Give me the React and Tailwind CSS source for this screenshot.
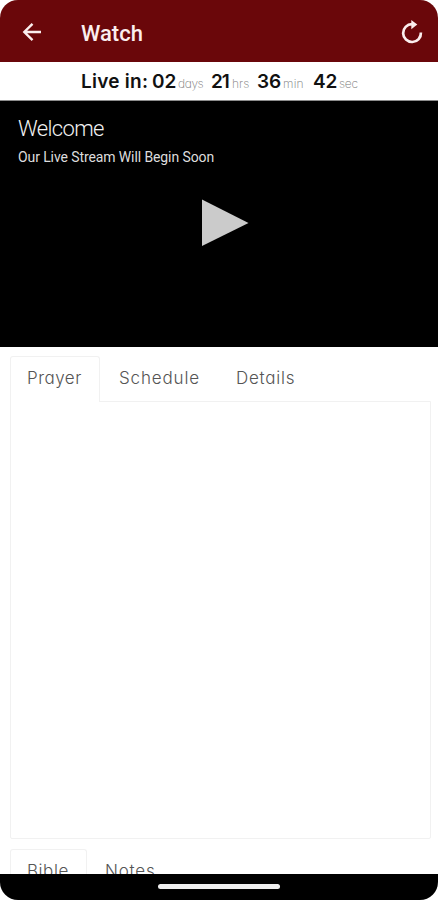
const geometric = "font-['Inter','Open_Sans',sans-serif] [font-feature-settings:'cv11','ss03']";

function Header() {
  return (
    <header className="flex h-[62px] shrink-0 items-center bg-[#6a070a] text-white">
      <svg className="mt-[2px] ml-[22px] h-5 w-5" viewBox="0 0 20 20" fill="none" stroke="#fbeeee" strokeWidth="2.4">
        <path d="M19 10H2.5M10.5 1.8L2.3 10l8.2 8.2" />
      </svg>
      <h1 className="mt-[5px] ml-[39px] font-[Roboto,sans-serif] text-[22px] leading-[26px] font-medium text-[#fbeeee]">
        Watch
      </h1>
      <svg className="mt-[2px] mr-[14px] ml-auto h-6 w-6" viewBox="0 0 24 24" fill="none">
        <path d="M12 4.2A8.9 8.9 0 1 0 20.9 12.5" stroke="#fbeeee" strokeWidth="2.7" />
        <path d="M11.3 0L17.3 4.6L11.3 9.2Z" fill="#fbeeee" />
      </svg>
    </header>
  );
}

function Countdown() {
  return (
    <div className={`flex h-[39px] shrink-0 items-baseline border-b border-[#8c8c8c] bg-white pt-[8px] pl-[81px] text-[19px] leading-6 font-semibold whitespace-nowrap text-[#111] ${geometric}`}>
      <span className="w-[71px] tracking-[0.25px]">Live in:</span>
      <span className="w-[26px]">02</span>
      <span className="w-[33px] text-[12px] font-extralight tracking-[-0.4px] text-[#777]">days</span>
      <span className="w-[21px] tracking-[-1px]">21</span>
      <span className="w-[25px] text-[12px] font-extralight text-[#777]">hrs</span>
      <span className="w-[26px]">36</span>
      <span className="w-[30px] text-[12px] font-extralight tracking-[0.2px] text-[#777]">min</span>
      <span className="w-[26px] tracking-[-0.2px]">42</span>
      <span className="text-[12px] font-extralight tracking-[-0.2px] text-[#777]">sec</span>
    </div>
  );
}

function Player() {
  return (
    <section className="flex h-[246px] shrink-0 flex-col bg-black pt-[14px] pl-[18px] font-[Roboto,sans-serif] whitespace-nowrap">
      <h2 className="mt-px text-[22px] leading-[26px] font-light tracking-[-0.65px] text-[#f2f2f2]">Welcome</h2>
      <p className="mt-[6px] text-[14px] leading-[18px] tracking-[-0.1px] text-[#ddd]">Our Live Stream Will Begin Soon</p>
      <svg className="mt-[33px] ml-[184px] h-[48px] w-[47px]" viewBox="0 0 47 48">
        <path d="M0 0.5L46.5 24L0 47Z" fill="#cbcbcb" />
      </svg>
    </section>
  );
}

function Tabs() {
  return (
    <nav className={`relative z-10 flex h-[46px] shrink-0 text-[17px] leading-6 font-light whitespace-nowrap text-[#555] ${geometric}`}>
      <span className="w-[90px] rounded-t-[3px] border border-b-0 border-[#f1f1f1] bg-white pt-[9px] pl-[16px] tracking-[0.5px]">Prayer</span>
      <span className="w-[118px] pt-[10px] pl-[19px] tracking-[0.85px]">Schedule</span>
      <span className="pt-[10px] pl-[18px] tracking-[0.75px]">Details</span>
    </nav>
  );
}

export default function App() {
  return (
    <div className="h-[900px] w-[438px] bg-white">
      <main className="flex h-full flex-col overflow-hidden rounded-[18px] bg-white">
        <Header />
        <Countdown />
        <Player />
        <div className="flex h-[527px] shrink-0 flex-col overflow-hidden px-[10px] pt-[9px]">
          <Tabs />
          <div className="-mt-px h-[438px] w-[421px] shrink-0 rounded-b-[2px] border border-[#f1f1f1]" />
          <nav className={`mt-[10px] flex h-[46px] shrink-0 text-[17px] leading-6 font-light whitespace-nowrap text-[#555] ${geometric}`}>
            <span className="w-[77px] rounded-t-[3px] border border-b-0 border-[#f1f1f1] pt-[9px] pl-[16px] tracking-[0.55px]">Bible</span>
            <span className="pt-[10px] pl-[18px] tracking-[0.8px]">Notes</span>
          </nav>
        </div>
        <footer className="flex flex-1 justify-center bg-black pt-[10px]">
          <div className="h-[5px] w-[122px] rounded-full bg-[#eee]" />
        </footer>
      </main>
    </div>
  );
}
